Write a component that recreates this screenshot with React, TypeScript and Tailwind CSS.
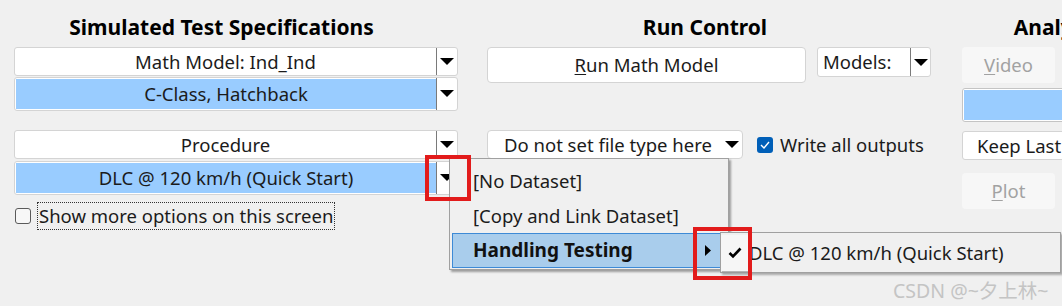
import type { ReactNode } from "react";

const FONT = { fontFamily: '"Noto Sans", "Open Sans", "Noto Sans CJK SC", sans-serif' };

const DownTri = () => (
  <svg width={14} height={7} viewBox="0 0 14 7">
    <polygon points="0,0 14,0 7,7" fill="#000" />
  </svg>
);

const Combo = ({ label, blue }: { label: string; blue?: boolean }) => (
  <div className={`flex rounded-[3px] border border-[#d4d4d4] bg-white ${blue ? "h-[34px]" : "h-[29px]"}`}>
    <div
      className={`flex flex-1 items-center justify-center text-[18.5px] text-[#1b1b1b] ${
        blue ? "my-[1px] ml-[1px] bg-[#99ccff]" : ""
      }`}
    >
      {label}
    </div>
    <div className="flex w-[21px] items-center justify-center border-l border-[#7a7a7a] pb-[1px]">
      <DownTri />
    </div>
  </div>
);

const Title = ({ children, shift }: { children: ReactNode; shift: string }) => (
  <div className={`flex h-[47px] items-center justify-center pt-[8px] text-[21px] font-bold text-black ${shift}`}>
    {children}
  </div>
);

const DisabledBtn = ({ first, rest }: { first: string; rest: string }) => (
  <div className="flex h-[36px] w-[93px] items-center justify-center rounded-[4px] bg-[#f7f7f7] text-[18.5px] text-[#a2a2a2]">
    <span className="underline underline-offset-2">{first}</span>
    {rest}
  </div>
);

export default function App() {
  return (
    <div className="relative h-[306px] w-[1062px] overflow-hidden bg-[#f0f0f0]" style={FONT}>
      <div className="flex pl-[14px]">
        {/* Simulated Test Specifications */}
        <div className="flex w-[444px] shrink-0 flex-col">
          <Title shift="pr-[29px]">Simulated Test Specifications</Title>
          <Combo label="Math Model: Ind_Ind" />
          <div className="mt-[1px]">
            <Combo label="C-Class, Hatchback" blue />
          </div>
          <div className="mt-[19px]">
            <Combo label="Procedure" />
          </div>
          <div className="mt-[2px]">
            <Combo label="DLC @ 120 km/h (Quick Start)" blue />
          </div>
          <div className="mt-[7px] flex h-[28px] items-center">
            <div className="ml-[1px] h-[16px] w-[16px] rounded-[3px] border border-[#5a5a5a] bg-[#f7f7f7]" />
            <div className="ml-[6px] flex h-[28px] items-center border border-dotted border-[#333] px-[1px] text-[18.5px] text-[#1b1b1b]">
              Show more options on this screen
            </div>
          </div>
        </div>

        {/* Run Control */}
        <div className="ml-[29px] flex w-[444px] shrink-0 flex-col">
          <Title shift="pr-[8px]">Run Control</Title>
          <div className="flex items-start">
            <div className="flex h-[36px] w-[319px] items-center justify-center rounded-[4px] border border-[#d4d4d4] bg-white text-[18.5px] text-[#1b1b1b]">
              <span className="underline underline-offset-2">R</span>un Math Model
            </div>
            <div className="ml-[11px] flex h-[30px] w-[114px] rounded-[3px] border border-[#d4d4d4] bg-white">
              <div className="flex flex-1 items-center pl-[5px] text-[18.5px] text-[#1b1b1b]">Models:</div>
              <div className="flex w-[20px] items-center justify-center border-l border-[#7a7a7a]">
                <DownTri />
              </div>
            </div>
          </div>
          <div className="mt-[47px] flex items-center">
            <div className="flex h-[29px] w-[256px] items-center rounded-[4px] border border-[#d4d4d4] bg-white pl-[16px] pr-[3px] text-[18.5px] text-[#1b1b1b]">
              <span className="flex-1 whitespace-nowrap">Do not set file type here</span>
              <DownTri />
            </div>
            <div className="ml-[14px] flex h-[16px] w-[16px] items-center justify-center rounded-[3px] bg-[#005fb8]">
              <svg width="10" height="8" viewBox="0 0 10 8">
                <path d="M1 4 L4 7 L9 1" stroke="#fff" strokeWidth="1.4" fill="none" />
              </svg>
            </div>
            <span className="ml-[7px] whitespace-nowrap text-[18.5px] text-[#1b1b1b]">Write all outputs</span>
          </div>
        </div>

        {/* Analysis */}
        <div className="ml-[31px] flex w-[190px] shrink-0 flex-col">
          <Title shift="">Analysis</Title>
          <DisabledBtn first="V" rest="ideo" />
          <div className="mt-[5px] h-[34px] rounded-[3px] border border-[#c4c4c4] bg-white p-[1px]">
            <div className="h-full w-full bg-[#99ccff]" />
          </div>
          <div className="mt-[9px] flex h-[29px] items-center rounded-[3px] border border-[#d4d4d4] bg-white pl-[14px] text-[18.5px] text-[#1b1b1b]">
            Keep Last
          </div>
          <div className="mt-[13px]">
            <DisabledBtn first="P" rest="lot" />
          </div>
        </div>
      </div>

      {/* dropdown menu */}
      <div className="absolute left-[449px] top-[158px] flex h-[112px] w-[280px] flex-col border border-[#a0a0a0] bg-[#f0f0f0] pt-[4px] shadow-[2px_2px_2px_rgba(0,0,0,0.35)]">
        <div className="flex h-[35px] items-center pl-[23px] text-[18.5px] text-[#1b1b1b]">[No Dataset]</div>
        <div className="flex h-[35px] items-center pl-[23px] text-[18.5px] text-[#1b1b1b]">[Copy and Link Dataset]</div>
        <div className="ml-[2px] mr-[2px] flex h-[35px] items-center border border-[#3d8ad6] bg-[#a9cdec] pl-[20px] pr-[4px] text-[19px] font-bold text-[#111]">
          <span className="flex-1">Handling Testing</span>
          <svg width="6" height="11" viewBox="0 0 6 11" className="mr-[10px]">
            <polygon points="0,0 6,5.5 0,11" fill="#000" />
          </svg>
        </div>
      </div>

      {/* submenu */}
      <div className="absolute left-[720px] top-[232px] flex h-[41px] w-[341px] items-center border border-[#a0a0a0] bg-[#f0f0f0] shadow-[2px_2px_2px_rgba(0,0,0,0.3)]">
        <div className="flex h-[36px] w-[28px] items-center justify-center bg-[#f6f6f6] shadow-[1px_1px_1px_rgba(0,0,0,0.25)]">
          <svg width="14" height="12" viewBox="0 0 14 12">
            <path d="M1.5 6 L5 9.5 L12.5 1.5" stroke="#000" strokeWidth="2.6" fill="none" />
          </svg>
        </div>
        <span className="whitespace-nowrap text-[18.5px] text-[#1b1b1b]">DLC @ 120 km/h (Quick Start)</span>
      </div>

      {/* red highlight boxes */}
      <div className="absolute left-[425px] top-[155px] h-[46px] w-[46px] border-4 border-[#e21b1b]" />
      <div className="absolute left-[693px] top-[227px] h-[53px] w-[59px] border-4 border-[#e21b1b]" />

      {/* watermark */}
      <div className="absolute left-[893px] top-[276px] whitespace-nowrap text-[19.5px] text-[#c4c4c4]">CSDN @~夕上林~</div>
    </div>
  );
}
